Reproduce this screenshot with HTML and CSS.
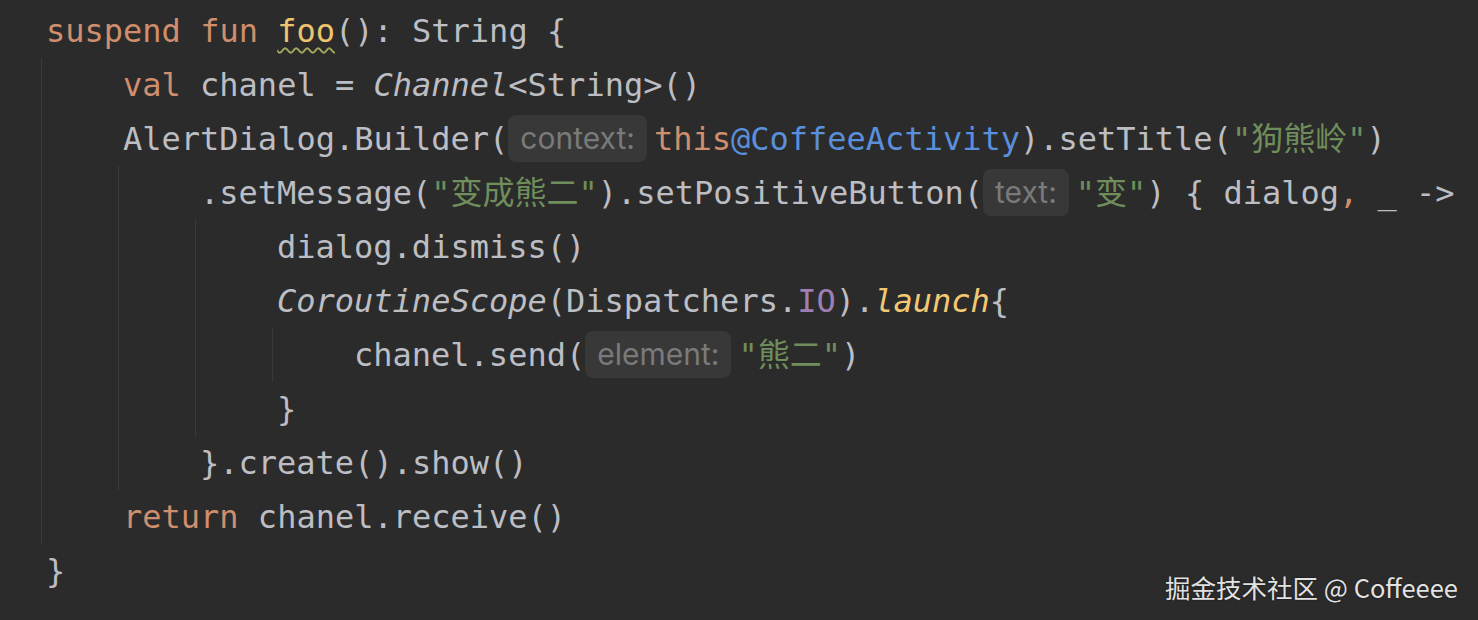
FILE: index.html
```html
<!DOCTYPE html>
<html>
<head>
<meta charset="utf-8">
<link rel="stylesheet" href="styles.css">
</head>
<body>
<div class="editor">
  <div class="code">
    <div class="ln"><span class="kw">suspend fun </span><span class="fn-decl">foo</span>(): String {</div>
    <div class="blk">
      <div class="ln"><span class="kw">val </span>chanel = <span class="it">Channel</span>&lt;String&gt;()</div>
      <div class="ln">AlertDialog.Builder(<span class="hint">context:</span><span class="kw">this</span><span class="label">@CoffeeActivity</span>).setTitle(<span class="str">"狗熊岭"</span>)</div>
      <div class="blk">
        <div class="ln">.setMessage(<span class="str">"变成熊二"</span>).setPositiveButton(<span class="hint">text:</span><span class="str">"变"</span>) { dialog<span class="kw">,</span> _ -&gt;</div>
        <div class="blk">
          <div class="ln">dialog.dismiss()</div>
          <div class="ln"><span class="it">CoroutineScope</span>(Dispatchers.<span class="static">IO</span>).<span class="ext">launch</span>{</div>
          <div class="blk">
            <div class="ln">chanel.send(<span class="hint">element:</span><span class="str">"熊二"</span>)</div>
          </div>
          <div class="ln">}</div>
        </div>
        <div class="ln">}.create().show()</div>
      </div>
      <div class="ln"><span class="kw">return </span>chanel.receive()</div>
    </div>
    <div class="ln">}</div>
  </div>
  <div class="watermark">掘金技术社区 @ Coffeeee</div>
</div>
</body>
</html>
```

FILE: styles.css
```css
html, body {
  margin: 0;
  padding: 0;
  background: #2b2b2b;
}
.editor {
  position: relative;
  width: 1478px;
  height: 620px;
  overflow: hidden;
  background: #2b2b2b;
}
.code {
  padding: 4px 0 0 46px;
  font-family: "DejaVu Sans Mono", "Noto Sans CJK SC", monospace;
  font-size: 32px;
  color: #bcbec4;
}
.ln {
  height: 54px;
  line-height: 54px;
  white-space: pre;
}
.blk {
  border-left: 1px solid #3a3a3a;
  margin-left: -5px;
  padding-left: 81px;
}
.kw { color: #cf8e6d; }
.fn-decl {
  color: #eec46e;
  text-decoration: underline wavy #a3a85a;
  text-decoration-thickness: 2px;
  text-underline-offset: 5px;
}
.it { font-style: italic; }
.ext { font-style: italic; color: #f3c873; }
.str { color: #6f8e5c; }
.label { color: #5a8fdc; }
.static { color: #9f7fb3; }
.hint {
  display: inline-block;
  height: 47px;
  line-height: 47px;
  padding: 0 12px;
  margin-right: 7px;
  vertical-align: middle;
  position: relative;
  top: -3px;
  background: #383838;
  border-radius: 8px;
  color: #7a7a7a;
  font-family: Inter, "Noto Sans", sans-serif;
  font-size: 30px;
}
.watermark {
  position: absolute;
  right: 20px;
  bottom: 15px;
  font-family: "Noto Sans CJK SC", "Noto Sans", sans-serif;
  font-size: 25.5px;
  color: #e2e2e2;
  text-shadow: 0 0 2px rgba(0,0,0,0.6);
}
```
